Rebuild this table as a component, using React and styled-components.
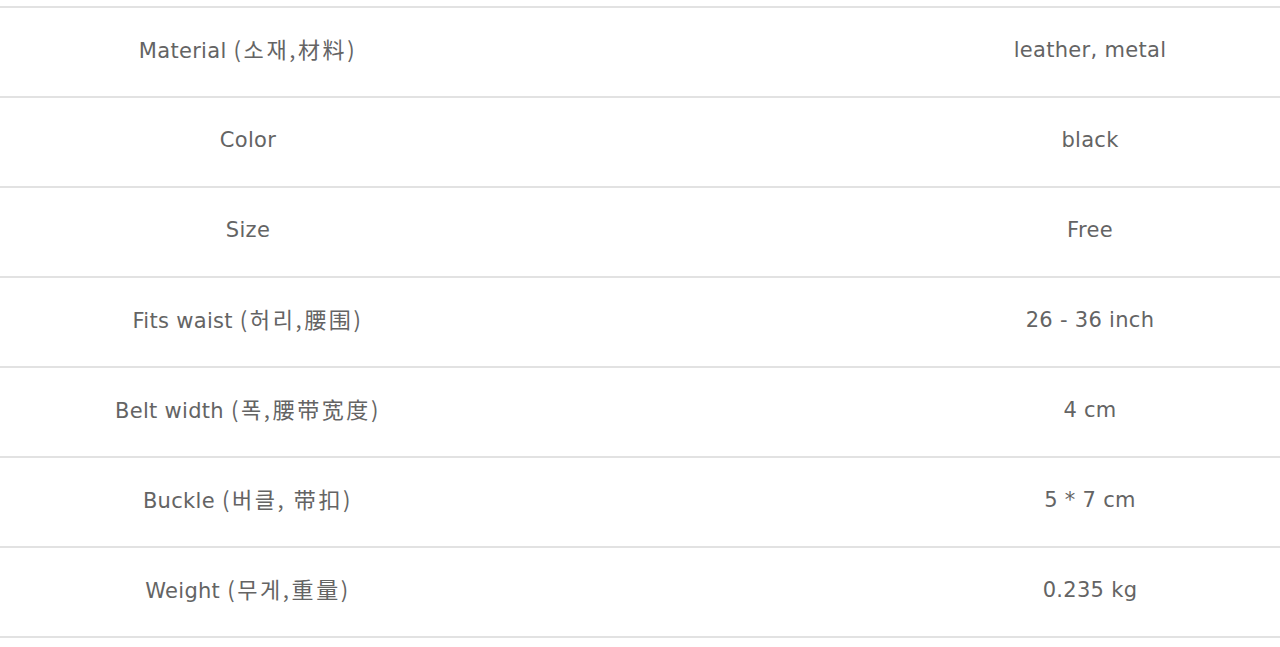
import React from 'react';
import styled, { createGlobalStyle } from 'styled-components';

const GlobalStyle = createGlobalStyle`
  html, body { margin: 0; padding: 0; background: #fff; }
`;

const rows = [
  { label: 'Material', note: '(소재,材料)', value: 'leather, metal' },
  { label: 'Color', value: 'black' },
  { label: 'Size', value: 'Free' },
  { label: 'Fits waist', note: '(허리,腰围)', value: '26 - 36 inch' },
  { label: 'Belt width', note: '(폭,腰带宽度)', value: '4 cm' },
  { label: 'Buckle', note: '(버클, 带扣)', value: '5 * 7 cm' },
  { label: 'Weight', note: '(무게,重量)', value: '0.235 kg' },
];

const Wrap = styled.div`
  padding-top: 6px;
`;

const Table = styled.div`
  width: 1280px;
  border-top: 2px solid #e2e2e2;
`;

const Row = styled.div`
  display: grid;
  grid-template-columns: 496px 1fr 380px;
  align-items: center;
  box-sizing: border-box;
  height: 90px;
  padding-bottom: 5px;
  border-bottom: 2px solid #e2e2e2;
  font-family: "DejaVu Sans", "Noto Sans CJK KR", sans-serif;
  font-size: 21px;
  line-height: 24px;
  letter-spacing: 0.3px;
  color: #646464;
`;

const Cell = styled.div`
  text-align: center;
  white-space: nowrap;
  grid-column: ${p => (p.$value ? 3 : 1)};
`;

const Note = styled.span`
  font-family: "Noto Sans CJK KR", sans-serif;
  font-size: 22px;
  line-height: 24px;
  letter-spacing: 2.6px;
`;

const App = () => (
  <>
    <GlobalStyle />
    <Wrap>
      <Table>
        {rows.map(r => (
          <Row key={r.label}>
            <Cell>
              {r.label}
              {r.note && <> <Note>{r.note}</Note></>}
            </Cell>
            <Cell $value>{r.value}</Cell>
          </Row>
        ))}
      </Table>
    </Wrap>
  </>
);

export default App;
